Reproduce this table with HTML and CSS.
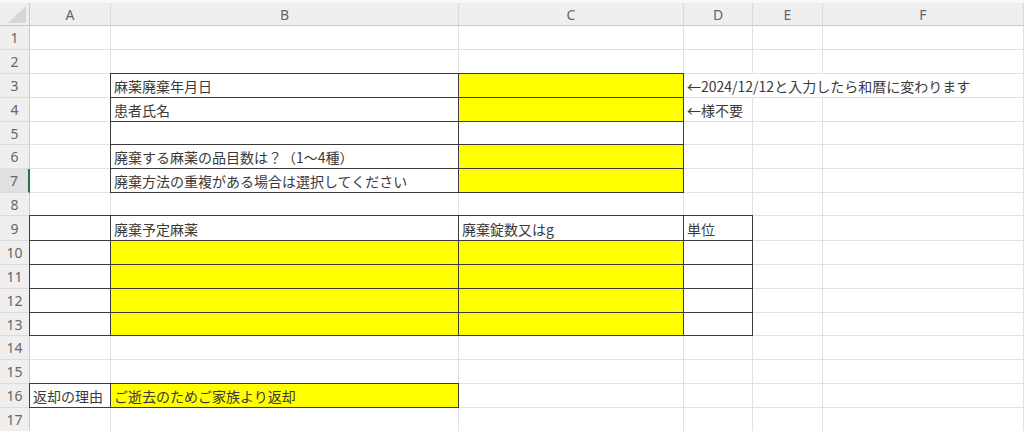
FILE: index.html
```html
<!DOCTYPE html>
<html lang="ja">
<head>
<meta charset="utf-8">
<title>麻薬廃棄</title>
<link rel="stylesheet" href="styles.css">
</head>
<body>
<div class="sheet">
  <div class="strip"></div>

  <div class="hd corner"><span class="tri"></span></div>
  <div class="hd">A</div>
  <div class="hd">B</div>
  <div class="hd">C</div>
  <div class="hd">D</div>
  <div class="hd">E</div>
  <div class="hd">F</div>

  <div class="rn">1</div><div class="c"></div><div class="c"></div><div class="c"></div><div class="c"></div><div class="c"></div><div class="c"></div>
  <div class="rn">2</div><div class="c"></div><div class="c"></div><div class="c"></div><div class="c"></div><div class="c"></div><div class="c"></div>

  <div class="rn">3</div><div class="c"></div><div class="c bd">麻薬廃棄年月日</div><div class="c bd y"></div><div class="c over">←2024/12/12と入力したら和暦に変わります</div>
  <div class="rn">4</div><div class="c"></div><div class="c bd">患者氏名</div><div class="c bd y"></div><div class="c">←様不要</div><div class="c"></div><div class="c"></div>
  <div class="rn">5</div><div class="c"></div><div class="c bd"></div><div class="c bd"></div><div class="c"></div><div class="c"></div><div class="c"></div>
  <div class="rn">6</div><div class="c"></div><div class="c bd">廃棄する麻薬の品目数は？（1～4種）</div><div class="c bd y"></div><div class="c"></div><div class="c"></div><div class="c"></div>
  <div class="rn sel">7</div><div class="c"></div><div class="c bd">廃棄方法の重複がある場合は選択してください</div><div class="c bd y"></div><div class="c"></div><div class="c"></div><div class="c"></div>
  <div class="rn">8</div><div class="c"></div><div class="c"></div><div class="c"></div><div class="c"></div><div class="c"></div><div class="c"></div>

  <div class="rn">9</div><div class="c bd"></div><div class="c bd">廃棄予定麻薬</div><div class="c bd">廃棄錠数又はg</div><div class="c bd">単位</div><div class="c"></div><div class="c"></div>
  <div class="rn">10</div><div class="c bd"></div><div class="c bd y"></div><div class="c bd y"></div><div class="c bd"></div><div class="c"></div><div class="c"></div>
  <div class="rn">11</div><div class="c bd"></div><div class="c bd y"></div><div class="c bd y"></div><div class="c bd"></div><div class="c"></div><div class="c"></div>
  <div class="rn">12</div><div class="c bd"></div><div class="c bd y"></div><div class="c bd y"></div><div class="c bd"></div><div class="c"></div><div class="c"></div>
  <div class="rn">13</div><div class="c bd"></div><div class="c bd y"></div><div class="c bd y"></div><div class="c bd"></div><div class="c"></div><div class="c"></div>

  <div class="rn">14</div><div class="c"></div><div class="c"></div><div class="c"></div><div class="c"></div><div class="c"></div><div class="c"></div>
  <div class="rn">15</div><div class="c"></div><div class="c"></div><div class="c"></div><div class="c"></div><div class="c"></div><div class="c"></div>
  <div class="rn">16</div><div class="c bd">返却の理由</div><div class="c bd y">ご逝去のためご家族より返却</div><div class="c"></div><div class="c"></div><div class="c"></div><div class="c"></div>
  <div class="rn">17</div><div class="c"></div><div class="c"></div><div class="c"></div><div class="c"></div><div class="c"></div><div class="c"></div>
</div>
</body>
</html>
```

FILE: styles.css
```css
html, body {
  margin: 0;
  padding: 0;
  background: #ffffff;
}

.sheet {
  display: grid;
  grid-template-columns: 30px 81px 348px 225px 69px 70px 1fr;
  grid-template-rows: 3px 23px 24px 24px 24px 24px 23px 24px 24px 23px 25px 24px 24px 24px 23px 24px 24px 24px 24px;
  width: 1024px;
  height: 431px;
  overflow: hidden;
  font-family: "Noto Sans CJK JP", "Noto Sans", sans-serif;
}

.strip {
  grid-column: 1 / -1;
  background: #f7f7f7;
}

.hd {
  background: #efefef;
  border-right: 1px solid #dadada;
  border-bottom: 1px solid #c8c8c8;
  box-sizing: border-box;
  display: flex;
  align-items: center;
  justify-content: center;
  font-family: "Noto Sans", "Open Sans", sans-serif;
  font-size: 14px;
  color: #666666;
}

.corner {
  position: relative;
  border-right-color: #c8c8c8;
}

.tri {
  position: absolute;
  left: 8px;
  top: 3px;
  width: 18px;
  height: 17px;
  background: #d6d6d6;
  clip-path: polygon(100% 0, 100% 100%, 0 100%);
}

.rn {
  background: #efefef;
  border-right: 1px solid #c8c8c8;
  border-bottom: 1px solid #dcdcdc;
  box-sizing: border-box;
  display: flex;
  align-items: center;
  justify-content: center;
  font-family: "Noto Sans", "Open Sans", sans-serif;
  font-size: 14px;
  color: #666666;
}

.rn.sel {
  background: #e0e0e0;
  border-right: 2px solid #217346;
}

.c {
  background: #ffffff;
  border-right: 1px solid #e1e1e1;
  border-bottom: 1px solid #e1e1e1;
  box-sizing: border-box;
  display: flex;
  align-items: center;
  padding: 1px 0 0 3px;
  font-size: 14px;
  color: #3a3a3a;
  white-space: nowrap;
  overflow: hidden;
}

.c.bd {
  border-right-color: #3a3a3a;
  border-bottom-color: #3a3a3a;
  box-shadow: 0 -1px 0 #3a3a3a, -1px 0 0 #3a3a3a, -1px -1px 0 #3a3a3a;
  overflow: visible;
}

.c.y {
  background: #ffff00;
}

.c.over {
  grid-column: span 3;
}
```
